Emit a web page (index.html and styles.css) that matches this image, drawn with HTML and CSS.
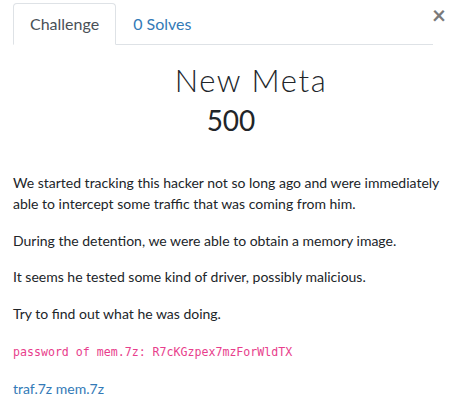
FILE: index.html
```html
<!DOCTYPE html>
<html>
<head>
<meta charset="utf-8">
<link rel="stylesheet" href="styles.css">
</head>
<body>
<div class="modal">
  <div class="header">
    <ul class="tabs">
      <li class="tab active">Challenge</li>
      <li class="tab"><a href="#">0 Solves</a></li>
    </ul>
    <button class="close" aria-label="Close">&times;</button>
  </div>
  <div class="content">
    <h2 class="title">New Meta</h2>
    <h3 class="value">500</h3>
    <div class="desc">
      <p>We started tracking this hacker not so long ago and were immediately able to intercept some traffic that was coming from him.</p>
      <p>During the detention, we were able to obtain a memory image.</p>
      <p>It seems he tested some kind of driver, possibly malicious.</p>
      <p>Try to find out what he was doing.</p>
      <p><code>password of mem.7z: R7cKGzpex7mzForWldTX</code></p>
      <p class="files"><a href="#">traf.7z</a> <a href="#">mem.7z</a></p>
    </div>
  </div>
</div>
</body>
</html>
```
FILE: styles.css
```css
* { box-sizing: border-box; }
html, body { margin: 0; padding: 0; background: #fff; }
body {
  font-family: "Lato", "Liberation Sans", sans-serif;
  color: #212529;
}
.modal {
  padding: 3px 13px 0 13px;
  position: relative;
}
.header {
  display: flex;
  align-items: flex-start;
}
.tabs {
  list-style: none;
  margin: 0;
  padding: 0;
  display: flex;
  width: 420px;
  border-bottom: 1px solid #dee2e6;
}
.tab {
  font-size: 16px;
  line-height: 24px;
  padding: 8px 16px;
  border: 1px solid transparent;
  border-top-left-radius: 4px;
  border-top-right-radius: 4px;
  margin-bottom: -1px;
}
.tab.active {
  color: #495057;
  border-color: #dee2e6 #dee2e6 #fff;
  background: #fff;
}
.tab a {
  color: #337ab7;
  text-decoration: none;
}
.close {
  position: absolute;
  right: 16px;
  top: 3px;
  border: 0;
  background: none;
  padding: 0;
  font-family: "Lato", sans-serif;
  font-size: 24px;
  font-weight: 700;
  line-height: 24px;
  color: #7a7a7a;
}
.title {
  text-align: center;
  font-family: "Lato", sans-serif;
  font-weight: 300;
  font-size: 31px;
  letter-spacing: 1.6px;
  line-height: 36px;
  margin: 17px 0 0 0;
  padding-left: 40px;
  color: #212529;
}
.value {
  text-align: center;
  font-weight: 400;
  font-size: 28px;
  line-height: 36px;
  margin: 4px 0 0 0;
  color: #212529;
}
.desc {
  margin-top: 34px;
  font-size: 14px;
  line-height: 21px;
}
.desc p {
  margin: 0 0 15.7px 0;
}
code {
  font-family: "DejaVu Sans Mono", monospace;
  font-size: 11.6px;
  color: #e83e8c;
}
.files a {
  color: #337ab7;
  text-decoration: none;
}
```
